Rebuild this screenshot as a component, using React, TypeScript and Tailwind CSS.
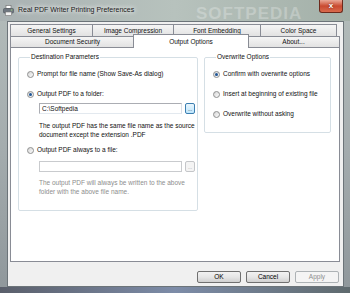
import React from "react";

const topTabs = [
  { label: "General Settings", w: "w-[83px]" },
  { label: "Image Compression", w: "w-[82px]" },
  { label: "Font Embedding", w: "w-[88px]" },
  { label: "Color Space", w: "w-[77px]" },
];

function Radio({ label, checked = false }: { label: string; checked?: boolean }) {
  return (
    <div className="flex h-[8px] items-center gap-[3px] leading-[8px]">
      <span className="flex h-[7px] w-[7px] shrink-0 items-center justify-center rounded-full border border-[#8e8f8f] bg-gradient-to-br from-[#d6d6d6] to-[#fcfcfc]">
        {checked && <span className="h-[3px] w-[3px] rounded-full bg-[#1f5596]" />}
      </span>
      <span className="whitespace-nowrap">{label}</span>
    </div>
  );
}

function Field({ value, disabled = false }: { value?: string; disabled?: boolean }) {
  return (
    <div className="flex items-center gap-[3px]">
      <div
        className={`flex h-[11px] w-[143px] items-center border px-[2px] bg-white ${
          disabled ? "border-[#c9cbce]" : "border-[#abadb3] border-b-[#e3e9ef] border-r-[#dbdfe6]"
        }`}
      >
        {value}
      </div>
      <div
        className={`flex h-[11px] w-[10px] items-end justify-center rounded-[2px] border pb-[1px] text-[5px] leading-[5px] ${
          disabled
            ? "border-[#c4c6c9] bg-[#f4f4f4] text-[#9a9a9a]"
            : "border-[#3c7fb1] bg-gradient-to-b from-[#eaf6fd] to-[#bee6fd] text-[#222]"
        }`}
      >
        ...
      </div>
    </div>
  );
}

function Button({ label, disabled = false }: { label: string; disabled?: boolean }) {
  return (
    <div
      className={`flex h-[12px] w-[44px] items-center justify-center rounded-[2px] border ${
        disabled
          ? "border-[#adb2b5] bg-[#f4f4f4] text-[#8d8d8d]"
          : "border-[#707070] bg-gradient-to-b from-[#f2f2f2] via-[#e6e6e6] to-[#d0d0d0] text-black"
      }`}
    >
      {label}
    </div>
  );
}

export default function App() {
  return (
    <div className="flex h-[293px] w-[350px] flex-col overflow-hidden bg-gradient-to-b from-[#b3bcba] via-[#a4acae] to-[#8f979b] font-['Liberation_Sans',Arial,sans-serif] text-[6.5px] text-[#111]">
      {/* Title bar */}
      <div className="relative flex h-[21px] shrink-0 items-center bg-gradient-to-r from-[#aab2b3] via-[#b7c2bd] to-[#a3b0a8] pl-[3px]">
        <svg width="11" height="11" viewBox="0 0 11 11" className="shrink-0">
          <rect x="3" y="0.5" width="5" height="3" fill="#fff" stroke="#777" strokeWidth="0.7" />
          <rect x="0.5" y="3.5" width="10" height="4.5" rx="1" fill="#6f7780" stroke="#4b5259" strokeWidth="0.6" />
          <rect x="2.5" y="7" width="6" height="3.5" fill="#f4f4f4" stroke="#777" strokeWidth="0.6" />
          <rect x="8" y="4.5" width="1.2" height="1" fill="#9fe07a" />
        </svg>
        <span className="ml-[4px] whitespace-nowrap text-[7px] text-[#1a1a1a] [text-shadow:0_0_4px_#fff,0_0_6px_#fff]">
          Real PDF Writer Printing Preferences
        </span>
        <span className="absolute left-[196px] top-[1px] whitespace-nowrap text-[17px] font-bold tracking-[1px] text-white/25">
          SOFTPEDIA
        </span>
        <div className="absolute right-[7px] top-0 flex h-[13px] w-[24px] items-center justify-center rounded-b-[3px] border border-t-0 border-[#6d2a1c] bg-gradient-to-b from-[#e9a897] via-[#c94a30] to-[#d96a4d]">
          <span className="text-[8px] font-bold leading-none text-white [text-shadow:0_0_2px_#5a1a0c]">x</span>
        </div>
      </div>

      {/* Window body with side frames */}
      <div className="flex flex-1 px-[7px]">
        <div className="flex flex-1 flex-col border border-[#6c7479] bg-[#f0f0f0] pl-[2px] pr-[3px] pt-[2px]">
          {/* Tabs, back row */}
          <div className="flex h-[12px]">
            {topTabs.map((t) => (
              <div
                key={t.label}
                className={`${t.w} -mr-px flex items-center justify-center border border-b-0 border-[#898c95] bg-gradient-to-b from-[#f5f5f5] to-[#e2e2e2]`}
              >
                {t.label}
              </div>
            ))}
          </div>
          {/* Tabs, front row */}
          <div className="relative z-10 flex h-[11px] items-end">
            <div className="flex h-[11px] w-[125px] items-center justify-center border border-b-0 border-[#898c95] bg-gradient-to-b from-[#f5f5f5] to-[#e2e2e2]">
              Document Security
            </div>
            <div className="relative -mx-[2px] -mb-px flex h-[14px] w-[116px] items-start justify-center border border-b-0 border-[#898c95] bg-white pt-[2px]">
              Output Options
            </div>
            <div className="flex h-[11px] w-[93px] items-center justify-center border border-b-0 border-[#898c95] bg-gradient-to-b from-[#f5f5f5] to-[#e2e2e2]">
              About...
            </div>
          </div>

          {/* Tab panel */}
          <div className="flex h-[215px] gap-[6px] border border-[#898c95] bg-white pl-[7px] pt-[5px]">
            <fieldset className="h-fit w-[180px] rounded-[2px] border border-[#d5dfe5] pb-[14px] pl-[8px]">
              <legend className="ml-[3px] px-[1px] leading-[8px]">Destination Parameters</legend>
              <div className="mt-[9px]">
                <Radio label="Prompt for file name (Show Save-As dialog)" />
              </div>
              <div className="mt-[12px]">
                <Radio label="Output PDF to a folder:" checked />
              </div>
              <div className="ml-[12px] mt-[5px]">
                <Field value="C:\Softpedia" />
              </div>
              <p className="ml-[12px] mt-[7px] w-[158px] leading-[9px]">
                The output PDF has the same file name as the source document except the extension .PDF
              </p>
              <div className="mt-[7px]">
                <Radio label="Output PDF always to a file:" />
              </div>
              <div className="ml-[12px] mt-[7px]">
                <Field disabled />
              </div>
              <p className="ml-[12px] mt-[7px] w-[158px] leading-[8.5px] text-[#8d8d8d]">
                The output PDF will always be written to the above folder with the above file name.
              </p>
            </fieldset>

            <fieldset className="h-fit w-[127px] rounded-[2px] border border-[#d5dfe5] pb-[14px] pl-[8px]">
              <legend className="ml-[3px] px-[1px] leading-[8px]">Overwrite Options</legend>
              <div className="mt-[9px]">
                <Radio label="Confirm with overwrite options" checked />
              </div>
              <div className="mt-[12px]">
                <Radio label="Insert at beginning of existing file" />
              </div>
              <div className="mt-[12px]">
                <Radio label="Overwrite without asking" />
              </div>
            </fieldset>
          </div>

          {/* Dialog buttons */}
          <div className="mt-[9px] flex justify-end gap-[5px] pr-px">
            <Button label="OK" />
            <Button label="Cancel" />
            <Button label="Apply" disabled />
          </div>
        </div>
      </div>

      {/* Bottom frame */}
      <div className="h-[6px] shrink-0 bg-gradient-to-r from-[#5a5f6b] via-[#7d8ca8] to-[#5f6a6e]" />
    </div>
  );
}
